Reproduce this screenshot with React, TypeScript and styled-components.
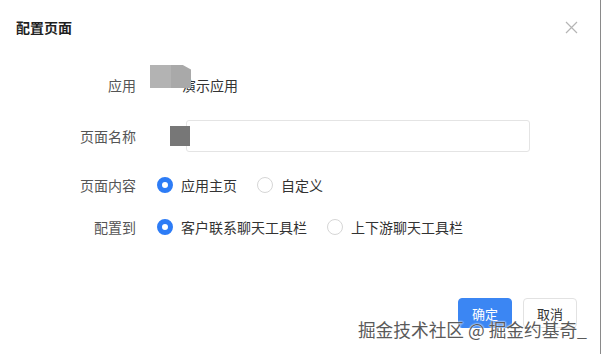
import React from "react";
import styled, { createGlobalStyle } from "styled-components";

const Global = createGlobalStyle`
  html, body { margin: 0; padding: 0; background: #fff; }
  body { font-family: "Noto Sans CJK SC", "Noto Sans", sans-serif; }
`;

const Dialog = styled.div`
  position: relative;
  width: 601px;
  height: 354px;
  border-right: 1px solid #8a8a8a;
  background: #fff;
  box-sizing: border-box;
  display: flex;
  flex-direction: column;
`;

const Header = styled.div`
  height: 54px;
  display: flex;
  align-items: center;
  justify-content: space-between;
  padding: 0 22px 0 16px;
  box-sizing: border-box;
`;

const Title = styled.div`
  font-size: 14px;
  font-weight: 700;
  color: #1f1f1f;
`;

const Close = styled.div`
  width: 14px;
  height: 14px;
  display: flex;
  align-items: center;
  justify-content: center;
`;

const Form = styled.div`
  display: flex;
  flex-direction: column;
`;

const Row = styled.div<{ $mt: number }>`
  margin-top: ${(p) => p.$mt}px;
  height: 32px;
  display: grid;
  grid-template-columns: 136px 1fr;
  column-gap: 14px;
  align-items: center;
`;

const Label = styled.div`
  text-align: right;
  font-size: 14px;
  color: #555;
`;

const Value = styled.div`
  position: relative;
  display: flex;
  align-items: center;
  height: 32px;
  font-size: 14px;
  color: #333;
`;

const AppName = styled.span`
  padding-left: 32px;
`;

const CensorBlock = styled.div`
  position: absolute;
  left: 0;
  top: -4px;
  width: 41px;
  height: 23px;
  z-index: 1;
  background: linear-gradient(90deg, #b3b3b3 0 52%, #a9a9a9 52% 100%);
  clip-path: polygon(0 0, 80% 0, 100% 20%, 100% 100%, 0 100%);
`;

const CensorSquare = styled.div`
  position: absolute;
  left: 20px;
  top: 6px;
  width: 20px;
  height: 20px;
  background: #777;
  z-index: 1;
`;

const Input = styled.div`
  margin-left: 36px;
  width: 344px;
  height: 32px;
  border: 1px solid #e4e4e4;
  border-radius: 3px;
  box-sizing: border-box;
`;

const Group = styled.div`
  display: flex;
  align-items: center;
  padding-left: 7px;
  gap: 20px;
`;

const Option = styled.label`
  display: flex;
  align-items: center;
  font-size: 14px;
  color: #333;
`;

const Dot = styled.span<{ $on?: boolean }>`
  width: 16px;
  height: 16px;
  border-radius: 50%;
  box-sizing: border-box;
  border: ${(p) => (p.$on ? "5px solid #2d7cf6" : "1px solid #d6d6d6")};
  background: #fff;
  margin-right: 8px;
`;

const Footer = styled.div`
  margin-top: auto;
  margin-bottom: 26px;
  display: flex;
  justify-content: flex-end;
  gap: 11px;
  padding-right: 23px;
`;

const Button = styled.div<{ $primary?: boolean }>`
  width: 54px;
  height: 30px;
  border-radius: 4px;
  box-sizing: border-box;
  display: flex;
  align-items: center;
  justify-content: center;
  font-size: 13px;
  color: ${(p) => (p.$primary ? "#fff" : "#333")};
  background: ${(p) => (p.$primary ? "#3b86f3" : "#fff")};
  border: 1px solid ${(p) => (p.$primary ? "#3b86f3" : "#e2e2e2")};
`;

const Watermark = styled.div`
  position: absolute;
  right: 13px;
  bottom: 12px;
  font-size: 17.7px;
  color: #5a5a5a;
  white-space: nowrap;
  text-shadow: 0 0 2px #fff, 0 0 2px #fff;
`;

export default function App() {
  return (
    <>
      <Global />
      <Dialog>
        <Header>
          <Title>配置页面</Title>
          <Close>
            <svg width="13" height="13" viewBox="0 0 13 13">
              <path d="M1 1L12 12M12 1L1 12" stroke="#b5b5b5" strokeWidth="1.2" />
            </svg>
          </Close>
        </Header>
        <Form>
          <Row $mt={15}>
            <Label>应用</Label>
            <Value>
              <CensorBlock />
              <AppName>演示应用</AppName>
            </Value>
          </Row>
          <Row $mt={19}>
            <Label>页面名称</Label>
            <Value>
              <CensorSquare />
              <Input />
            </Value>
          </Row>
          <Row $mt={17}>
            <Label>页面内容</Label>
            <Value>
              <Group>
                <Option><Dot $on />应用主页</Option>
                <Option><Dot />自定义</Option>
              </Group>
            </Value>
          </Row>
          <Row $mt={10}>
            <Label>配置到</Label>
            <Value>
              <Group>
                <Option><Dot $on />客户联系聊天工具栏</Option>
                <Option><Dot />上下游聊天工具栏</Option>
              </Group>
            </Value>
          </Row>
        </Form>
        <Footer>
          <Button $primary>确定</Button>
          <Button>取消</Button>
        </Footer>
        <Watermark>掘金技术社区 @ 掘金约基奇_</Watermark>
      </Dialog>
    </>
  );
}
